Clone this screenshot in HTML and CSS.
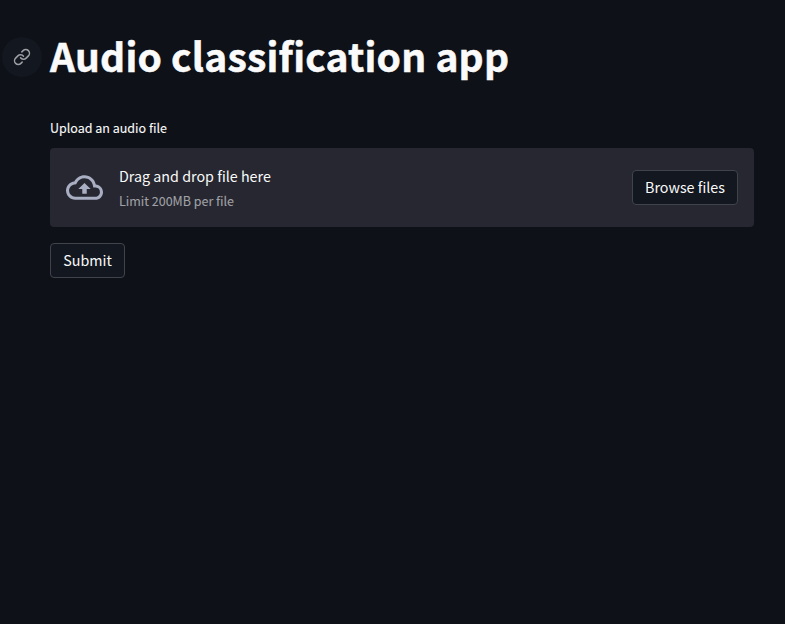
FILE: index.html
```html
<!DOCTYPE html>
<html lang="en">
<head>
<meta charset="utf-8">
<title>Audio classification app</title>
<link rel="stylesheet" href="styles.css">
</head>
<body>
<main class="page">
  <header class="heading">
    <a class="anchor" href="#title" aria-label="Link to heading">
      <svg width="18" height="18" viewBox="0 0 24 24" fill="none" stroke="currentColor" stroke-width="2" stroke-linecap="round" stroke-linejoin="round"><path d="M10 13a5 5 0 0 0 7.54.54l3-3a5 5 0 0 0-7.07-7.07l-1.72 1.71"/><path d="M14 11a5 5 0 0 0-7.54-.54l-3 3a5 5 0 0 0 7.07 7.07l1.71-1.71"/></svg>
    </a>
    <h1 class="title" id="title"><span>Audio classification app</span></h1>
  </header>
  <div class="content">
    <div class="label"><span>Upload an audio file</span></div>
    <section class="dropzone">
      <svg class="cloud" width="37" height="37" viewBox="0 0 24 24" fill="currentColor"><path d="M19.35 10.04C18.67 6.59 15.64 4 12 4 9.11 4 6.6 5.64 5.35 8.04 2.34 8.36 0 10.91 0 14c0 3.31 2.69 6 6 6h13c2.76 0 5-2.24 5-5 0-2.64-2.05-4.78-4.65-4.96zM19 18H6c-2.21 0-4-1.79-4-4 0-2.05 1.53-3.76 3.56-3.97l1.07-.11.5-.95A5.469 5.469 0 0 1 12 6c2.62 0 4.88 1.86 5.39 4.43l.3 1.5 1.53.11A2.98 2.98 0 0 1 22 15c0 1.65-1.35 3-3 3zM8 13h2.55v3h2.9v-3H16l-4-4z"/></svg>
      <div class="hint">
        <span class="hint-main">Drag and drop file here</span>
        <span class="hint-limit">Limit 200MB per file</span>
      </div>
      <button class="button browse">Browse files</button>
    </section>
    <button class="button submit">Submit</button>
  </div>
</main>
</body>
</html>
```
FILE: styles.css
```css
* { box-sizing: border-box; }
body {
  margin: 0;
  min-height: 100vh;
  background: #0e1117;
  color: #fafafa;
  font-family: "Noto Sans CJK SC", "Noto Sans", sans-serif;
}
.page { padding: 30px 31px 0 2px; }
.heading { display: flex; align-items: center; gap: 8px; height: 53px; }
.anchor {
  display: flex;
  align-items: center;
  justify-content: center;
  width: 40px;
  height: 40px;
  border-radius: 50%;
  background: #13171f;
  color: #9d9fa4;
}
.title {
  margin: 0;
  padding-bottom: 2px;
  font-size: 39px;
  font-weight: 700;
  line-height: 51px;
  letter-spacing: 0.18px;
  white-space: nowrap;
  -webkit-text-stroke: 0.5px currentColor;
}
.content { padding-left: 48px; }
.label {
  margin-top: 35px;
  height: 30px;
  font-size: 12.5px;
  line-height: 20px;
  -webkit-text-stroke: 0.1px currentColor;
}
.dropzone {
  display: flex;
  align-items: center;
  height: 79px;
  padding: 0 16px;
  border-radius: 4px;
  background: #262730;
}
.cloud { color: #a9aec2; flex: none; }
.hint { display: flex; flex-direction: column; margin-left: 16px; white-space: nowrap; }
.hint-main { font-size: 14.3px; line-height: 26px; }
.hint-limit { font-size: 12.5px; line-height: 24px; color: #a0a1a6; -webkit-text-stroke: 0.1px currentColor; }
.button {
  height: 35px;
  padding: 0 0 2px;
  border: 1px solid #41434b;
  border-radius: 4px;
  background: #13171f;
  color: #fafafa;
  font: 14.3px/31px "Noto Sans CJK SC", "Noto Sans", sans-serif;
  white-space: nowrap;
}
.browse { width: 106px; margin-left: auto; }
.submit { display: block; width: 75px; margin-top: 16px; }
```
